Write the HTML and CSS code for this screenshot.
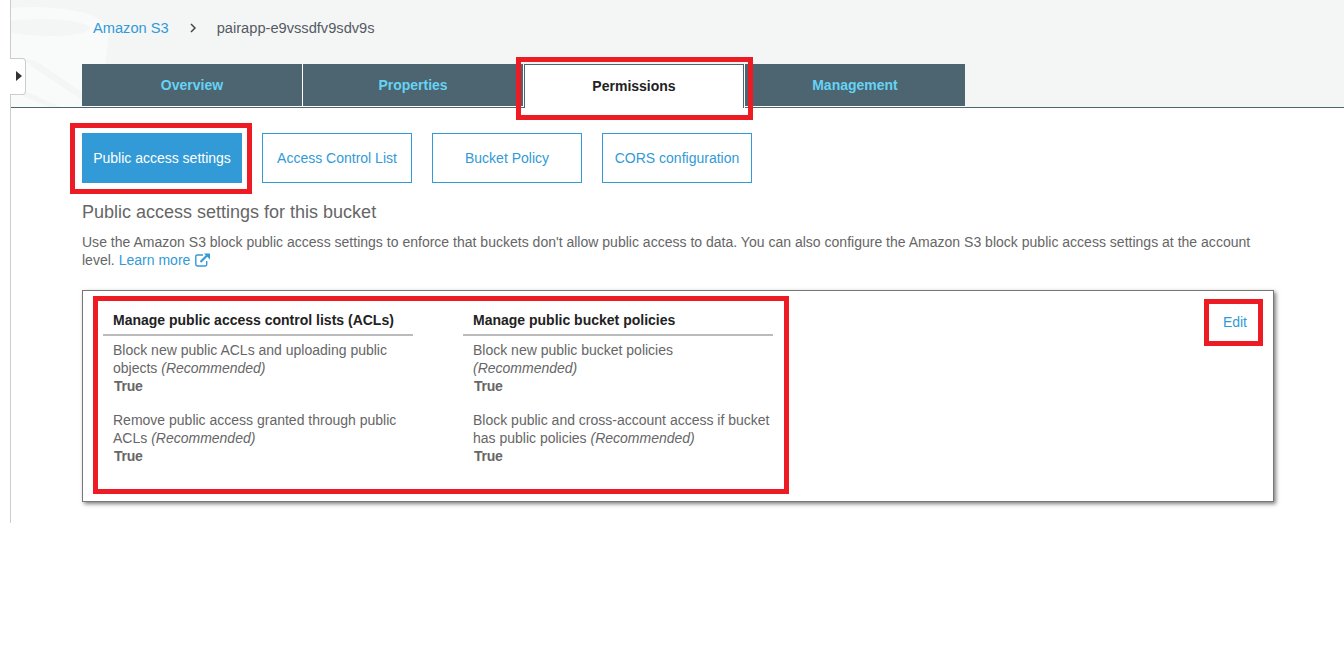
FILE: index.html
```html
<!DOCTYPE html>
<html lang="en">
<head>
<meta charset="utf-8">
<title>S3 Management Console</title>
<link rel="stylesheet" href="styles.css">
</head>
<body>
<div class="console">
  <header class="header">
    <svg class="bucket-art" width="100" height="107" viewBox="0 0 100 107" aria-hidden="true">
      <path d="M0 8 C45 4 99 12 98 34 L94 64 L87 107 H0Z" fill="#f9fbfb"/>
      <path d="M0 21 C30 17 76 20 79 28 C76 37 30 38 0 33Z" fill="#f4f6f6"/>
      <path d="M14 60 Q20 58 28 63 L78 97 V105 L22 67Z" fill="#f4f6f6"/>
      <path d="M12 90 L49 107 H38 L10 95Z" fill="#f4f6f6"/>
    </svg>
    <button class="drawer" aria-label="Open navigation"><svg width="6" height="10" viewBox="0 0 6 10"><path d="M0 0L6 5L0 10Z" fill="#333"/></svg></button>
    <nav class="crumbs">
      <a>Amazon S3</a>
      <svg width="6" height="10" viewBox="0 0 6 10"><path d="M1 1L5 5L1 9" fill="none" stroke="#444" stroke-width="1.5"/></svg>
      <span>pairapp-e9vssdfv9sdv9s</span>
    </nav>
    <div class="tabs">
      <a class="tab">Overview</a>
      <a class="tab">Properties</a>
      <a class="tab tab-active">Permissions</a>
      <a class="tab">Management</a>
      <i class="mark mark-tab"></i>
    </div>
  </header>
  <main class="content">
    <div class="actions">
      <a class="btn btn-primary">Public access settings<i class="mark mark-btn"></i></a>
      <a class="btn">Access Control List</a>
      <a class="btn">Bucket Policy</a>
      <a class="btn">CORS configuration</a>
    </div>
    <h1 class="title">Public access settings for this bucket</h1>
    <p class="intro">Use the Amazon S3 block public access settings to enforce that buckets don't allow public access to data. You can also configure the Amazon S3 block public access settings at the account<br>level. <a>Learn more <svg class="ext" width="15" height="14" viewBox="0 0 15 14"><path d="M8 2H2.200Q.8 2 .8 3.400V11.600Q.8 13 2.200 13H10.300Q11.700 13 11.700 11.600V8" fill="none" stroke="#329ad6" stroke-width="1.400"/><path d="M5.500 9L12 2.500" stroke="#329ad6" stroke-width="2.200"/><path d="M9 .5H15V6.500Z" fill="#329ad6"/></svg></a></p>
    <section class="panel">
      <div class="group">
        <h2>Manage public access control lists (ACLs)</h2>
        <div class="setting">Block new public ACLs and uploading public<br>objects <em>(Recommended)</em><strong>True</strong></div>
        <div class="setting">Remove public access granted through public<br>ACLs <em>(Recommended)</em><strong>True</strong></div>
      </div>
      <div class="group">
        <h2>Manage public bucket policies</h2>
        <div class="setting">Block new public bucket policies<br><em>(Recommended)</em><strong>True</strong></div>
        <div class="setting">Block public and cross-account access if bucket<br>has public policies <em>(Recommended)</em><strong>True</strong></div>
      </div>
      <a class="edit">Edit<i class="mark mark-edit"></i></a>
      <i class="mark mark-groups"></i>
    </section>
  </main>
</div>
</body>
</html>
```
FILE: styles.css
```css
* { box-sizing: border-box; }
body {
  margin: 0;
  background: #fff;
  color: #666;
  font: 14px/18px "Liberation Sans", Arial, sans-serif;
  overflow: hidden;
}
a { color: #329ad6; }
.console {
  height: 523px;
  margin-left: 10px;
  border-left: 1px solid #ccc;
}
.header {
  position: relative;
  height: 108px;
  padding: 19px 0 0 71px;
  background: #f4f6f6;
  border-bottom: 1px solid #4d6471;
}
.bucket-art { position: absolute; left: 0; top: 0; }
.drawer {
  position: absolute;
  left: -1px;
  top: 58px;
  display: flex;
  align-items: center;
  justify-content: flex-end;
  width: 16px;
  height: 37px;
  padding: 0 3px 1px 0;
  background: #fff;
  border: 1px solid #ccc;
  border-left: 0;
  border-radius: 0 4px 4px 0;
}
.crumbs {
  position: relative;
  display: flex;
  align-items: center;
  height: 18px;
  padding-left: 11px;
  color: #545b64;
  font-size: 14.65px;
}
.crumbs svg { margin: 0 21px; }
.tabs {
  position: relative;
  display: flex;
  width: 883px;
  height: 44px;
  margin-top: 27px;
}
.tab {
  width: 221px;
  height: 43px;
  border: solid #fff;
  border-width: 0 1px 1px 0;
  background: #4d6471;
  color: #65d3f4;
  font-weight: bold;
  line-height: 43px;
  text-align: center;
}
.tab:nth-of-type(4) { width: 220px; border-right: 0; }
.tab-active {
  width: 220px;
  height: 44px;
  margin-right: 1px;
  border: solid #4d6471;
  border-width: 1px 1px 0;
  background: #fff;
  box-shadow: 1px 0 #fff;
  color: #222;
}
.content { padding: 25px 70px 0 71px; }
.actions { display: flex; gap: 20px; }
.btn {
  position: relative;
  width: 150px;
  height: 50px;
  border: 1px solid #329ad6;
  line-height: 48px;
  text-align: center;
}
.btn-primary { width: 160px; background: #329ad6; color: #fff; }
.title {
  margin: 18px 0 0;
  font-size: 18px;
  font-weight: normal;
  line-height: 22px;
}
.intro { margin: 10px 0 0; letter-spacing: .011px; white-space: nowrap; }
.ext { height: 14px; margin-left: 1px; vertical-align: -2px; }
.panel {
  position: relative;
  display: flex;
  width: 1192px;
  height: 212px;
  margin-top: 21px;
  padding: 19px 20px;
  border: 1px solid #777;
  box-shadow: 2px 2px 4px rgba(0, 0, 0, .5);
}
.group { width: 310px; margin-right: 50px; white-space: nowrap; }
.group h2 {
  margin: 0;
  padding: 1px 10px 5px;
  border-bottom: 2px solid #bbb;
  color: #222;
  font-size: 14px;
  line-height: 18px;
}
.setting { margin-bottom: 16px; padding: 0 10px; }
.group h2 + .setting { margin-top: 5px; }
.setting strong { display: block; padding-left: 1px; letter-spacing: -.3px; }
.edit { position: relative; height: 18px; margin: 3px 6px 0 auto; }
.mark {
  position: absolute;
  z-index: 2;
  border: 5px solid #ed1c24;
  pointer-events: none;
}
.mark-tab { left: 434px; top: -7px; width: 237px; height: 63px; }
.mark-btn { left: -13px; top: -11px; width: 182px; height: 71px; }
.mark-groups { left: 10px; top: 5px; width: 696px; height: 198px; }
.mark-edit { left: -19px; top: -14px; width: 59px; height: 47px; }
```
